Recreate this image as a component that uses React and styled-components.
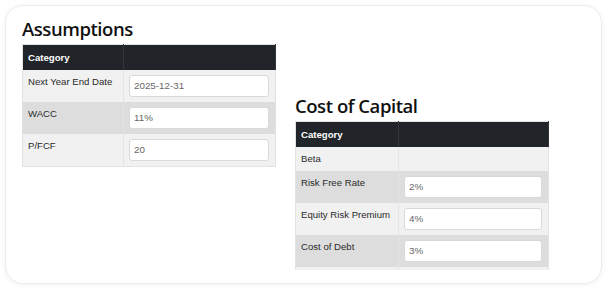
import styled, { createGlobalStyle } from 'styled-components';

const GlobalStyle = createGlobalStyle`
  html, body {
    margin: 0;
    padding: 0;
    background: #ffffff;
  }
  * {
    box-sizing: border-box;
  }
`;

const Page = styled.div`
  padding: 5px 6px 6px 5px;
`;

const Card = styled.div`
  height: 279px;
  border: 1px solid #ececec;
  border-radius: 18px;
  box-shadow: 0 1px 5px rgba(0, 0, 0, 0.06);
  background: #fff;
  padding: 10px 16px 13px 16px;
`;

const Scroll = styled.div`
  height: 254px;
  overflow: hidden;
  display: flex;
  align-items: flex-start;
  gap: 19px;
`;

const Section = styled.section`
  width: 254px;
  margin-top: ${({ offset }) => offset || 0}px;
`;

const Title = styled.h2`
  margin: 0 0 3px 0;
  font-family: 'Open Sans', 'Noto Sans', sans-serif;
  font-weight: 600;
  font-size: 18.5px;
  letter-spacing: -0.45px;
  line-height: 25px;
  color: #111;
`;

const Table = styled.table`
  width: 100%;
  border-collapse: collapse;
  table-layout: fixed;
  font-family: 'Liberation Sans', Arial, sans-serif;
  font-size: 9.6px;
  border: 1px solid #e2e2e2;
`;

const Head = styled.th`
  background: #212529;
  color: #fff;
  font-weight: 700;
  text-align: left;
  padding: 6px 5px;
  height: 25px;
  border-right: 1px solid #32363b;
  width: ${({ w }) => w || 'auto'};
`;

const Row = styled.tr`
  background: ${({ shade }) => (shade ? '#dddddd' : '#f1f1f1')};
`;

const Label = styled.td`
  vertical-align: top;
  padding: 6px 5px;
  line-height: 12px;
  color: #2a2a2a;
  border-right: 1px solid #e4e4e4;
`;

const Field = styled.td`
  padding: 5px 6px 5px 5px;
  vertical-align: top;
`;

const Input = styled.input`
  display: block;
  width: 100%;
  height: 22px;
  border: 1px solid #d9d9d9;
  border-radius: 3px;
  background: #fff;
  padding: 0 4px;
  font-family: 'Liberation Sans', Arial, sans-serif;
  font-size: 9.8px;
  color: #666;
  outline: none;
`;

const assumptions = [
  { label: 'Next Year End Date', value: '2025-12-31' },
  { label: 'WACC', value: '11%' },
  { label: 'P/FCF', value: '20' },
];

const capital = [
  { label: 'Beta' },
  { label: 'Risk Free Rate', value: '2%' },
  { label: 'Equity Risk Premium', value: '4%' },
  { label: 'Cost of Debt', value: '3%' },
  { label: 'Tax Rate', value: '21%' },
];

function InputTable({ title, rows, offset, first }) {
  return (
    <Section offset={offset}>
      <Title>{title}</Title>
      <Table>
        <thead>
          <tr>
            <Head w={first}>Category</Head>
            <Head />
          </tr>
        </thead>
        <tbody>
          {rows.map((r, i) => (
            <Row key={r.label} shade={i % 2 === 1}>
              <Label>{r.label}</Label>
              <Field>{r.value !== undefined && <Input defaultValue={r.value} />}</Field>
            </Row>
          ))}
        </tbody>
      </Table>
    </Section>
  );
}

export default function App() {
  return (
    <Page>
      <GlobalStyle />
      <Card>
        <Scroll>
          <InputTable title="Assumptions" rows={assumptions} first="101px" />
          <InputTable title="Cost of Capital" rows={capital} offset={77} first="103px" />
        </Scroll>
      </Card>
    </Page>
  );
}
